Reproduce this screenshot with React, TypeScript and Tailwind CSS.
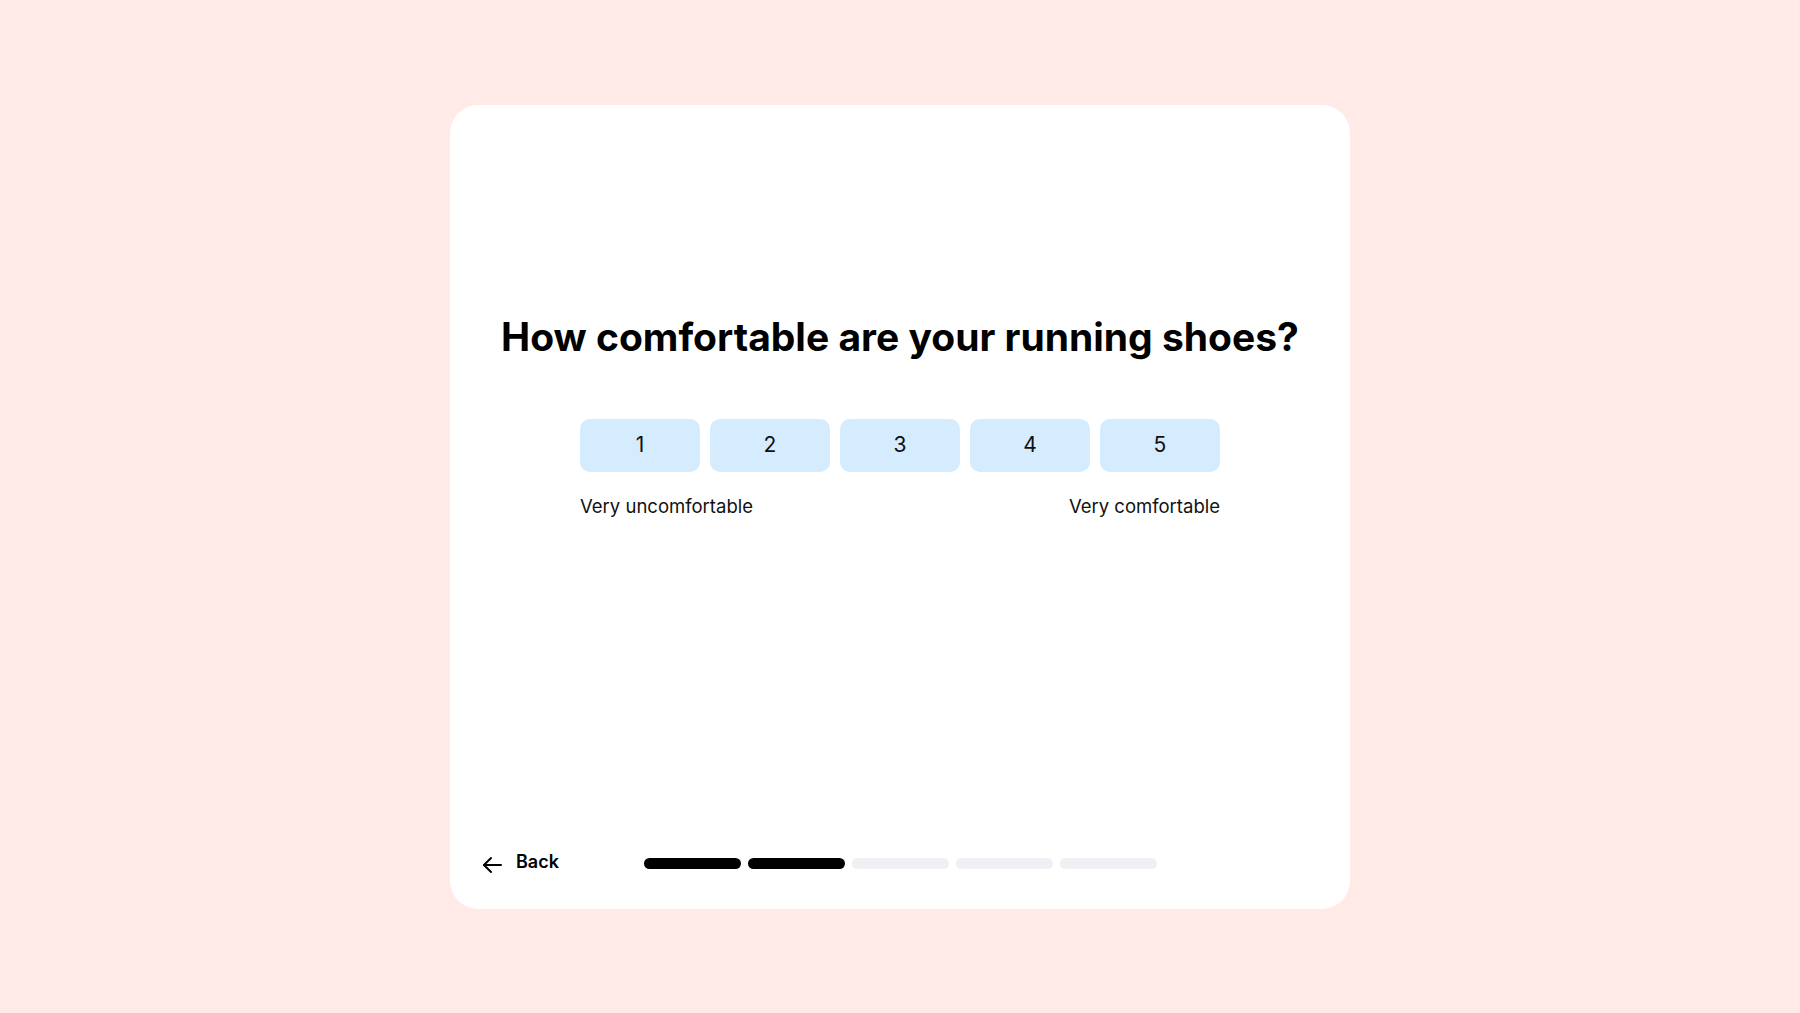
import { useState } from 'react'

const options = [1, 2, 3, 4, 5]
const steps = 5
const current = 2

export default function App() {
  const [picked, setPicked] = useState<number | null>(null)

  return (
    <div className="min-h-screen w-full bg-[#ffeae8] flex items-center justify-center font-['Inter',sans-serif] text-black">
      <div className="w-[900px] h-[804px] bg-white rounded-[28px] flex flex-col px-8">
        <div className="flex-1 flex flex-col items-center pt-[212px]">
          <h1 className="text-[39px] leading-10 font-bold">How comfortable are your running shoes?</h1>

          <div className="mt-[62px] flex gap-2.5">
            {options.map((n) => (
              <button
                key={n}
                onClick={() => setPicked(n)}
                className={
                  'w-[120px] h-[53px] rounded-[10px] text-[21px] text-[#111] flex items-center justify-center ' +
                  (picked === n ? 'bg-[#a9d6fb]' : 'bg-[#d5ebfe]')
                }
              >
                {n}
              </button>
            ))}
          </div>

          <div className="mt-[20px] w-[640px] flex justify-between text-[18.5px] leading-7 text-[#111]">
            <span>Very uncomfortable</span>
            <span>Very comfortable</span>
          </div>
        </div>

        <div className="pb-[31px] h-[59px] grid grid-cols-[1fr_auto_1fr] items-center">
          <button className="flex items-center gap-3.5 justify-self-start">
            <svg width="20" height="18" viewBox="0 0 20 18" fill="none" stroke="currentColor" strokeWidth="2" strokeLinecap="round" strokeLinejoin="round" className="mt-0.5">
              <path d="M19 9H2" />
              <path d="M9 2 2 9l7 7" />
            </svg>
            <span className="text-lg font-semibold leading-7 -mt-1">Back</span>
          </button>

          <div className="flex gap-[7px]">
            {Array.from({ length: steps }).map((_, i) => (
              <div
                key={i}
                className={'w-[97px] h-[11px] rounded-full ' + (i < current ? 'bg-black' : 'bg-[#eff0f4]')}
              />
            ))}
          </div>

          <div />
        </div>
      </div>
    </div>
  )
}
